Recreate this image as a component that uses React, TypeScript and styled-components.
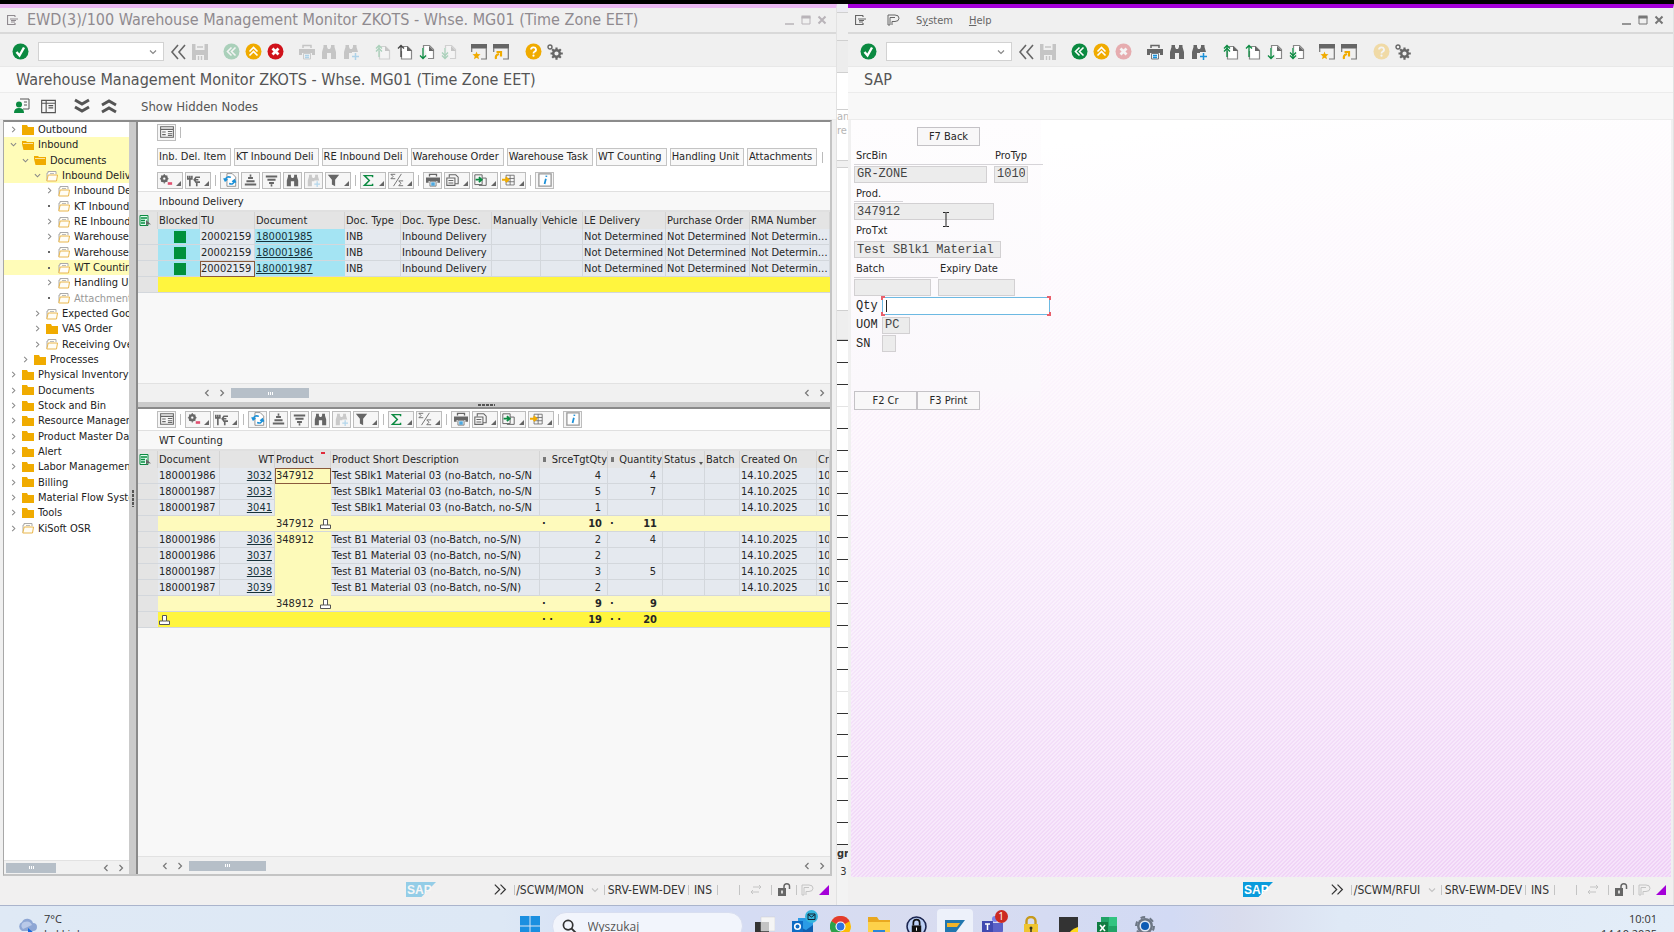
import React from "react";
import styled, { createGlobalStyle, css } from "styled-components";

const ui = `"DejaVu Sans Condensed", "DejaVu Sans", sans-serif`;
const mono = `"Liberation Mono", monospace`;

const Global = createGlobalStyle`
  * { box-sizing: border-box; }
  body { margin: 0; overflow: hidden; background: #000; font-family: ${ui}; font-size: 11px; color: #262626; }
  button, input { font: inherit; color: inherit; margin: 0; }
  button { padding: 0; border: 0; background: none; }
  svg { display: block; flex: none; }
`;

const Screen = styled.div`
  display: grid;
  grid-template-rows: minmax(0, 1fr) 27px;
  height: 100vh;
  padding-top: 4px;
`;
const Desktop = styled.main`
  display: grid;
  grid-template-columns: minmax(0, 837fr) 11px minmax(0, 826fr);
  min-height: 0;
  background: #fff;
`;

/* ---------- window frame ---------- */
const Frame = styled.section<{ $active?: boolean }>`
  display: flex;
  flex-direction: column;
  min-width: 0;
  min-height: 0;
  border-top: 4px solid ${(p) => (p.$active ? "#a400d8" : "#ebb8f3")};
  background: #f0f0f0;
  border-right: 1px solid #e2e2e2;
`;
const TitleBar = styled.header<{ $active?: boolean }>`
  display: flex;
  align-items: center;
  gap: 8px;
  flex: none;
  height: 26px;
  padding: 0 9px 0 7px;
  border-bottom: 2px solid #d9d9d9;
  color: ${(p) => (p.$active ? "#666" : "#8f8a8f")};
`;
const TitleText = styled.h1`
  margin: 0;
  flex: 1;
  font-size: 16px;
  font-weight: 400;
  line-height: 20px;
  white-space: nowrap;
  overflow: hidden;
`;
const Menu = styled.nav`
  display: flex;
  flex: 1;
  align-items: center;
  gap: 16px;
  padding-left: 12px;
  font-size: 11px;
`;
const WinButtons = styled.div<{ $active?: boolean }>`
  display: flex;
  gap: 6px;
  color: ${(p) => (p.$active ? "#777" : "#b9b4b9")};
`;
const Toolbar = styled.div`
  display: flex;
  align-items: center;
  flex: none;
  height: 33px;
  padding: 3px 0 0 9px;
  border-bottom: 1px solid #e8e8e8;
`;
const ToolGroup = styled.div<{ $gap: number }>`
  display: flex;
  margin-left: ${(p) => p.$gap}px;
`;
const ToolButton = styled.button<{ $dim?: boolean }>`
  display: flex;
  align-items: center;
  justify-content: center;
  width: 22px;
  height: 22px;
  color: #666;
  opacity: ${(p) => (p.$dim ? 0.3 : 1)};
`;
const Command = styled.div`
  display: flex;
  align-items: center;
  width: 126px;
  height: 19px;
  margin: 0 3px 0 7px;
  border: 1px solid #d2d2d2;
  background: #fff;
  color: #888;
`;
const CommandInput = styled.input`
  flex: 1;
  min-width: 0;
  height: 17px;
  border: 0;
  outline: 0;
  background: transparent;
`;
const CommandDrop = styled.button`
  width: 14px;
`;
const Heading = styled.div`
  flex: none;
  height: 26px;
  padding-left: 16px;
  border-bottom: 1px solid #ececec;
  background: #fafafa;
  color: #555;
  font-size: 16px;
  line-height: 26px;
  white-space: nowrap;
`;
const AppBar = styled.div`
  display: flex;
  align-items: center;
  flex: none;
  height: 27px;
  padding-left: 11px;
  background: #f8f8f8;
  border-bottom: 1px solid #ececec;
  color: #555;
  font-size: 13px;
`;
const AppBarButton = styled.button<{ $w: number }>`
  display: flex;
  align-items: center;
  justify-content: center;
  width: ${(p) => p.$w}px;
`;
const TextTool = styled.button`
  margin-left: 24px;
`;
const Status = styled.footer`
  display: flex;
  align-items: center;
  justify-content: flex-end;
  flex: none;
  height: 28px;
  padding: 0 5px 3px 0;
  background: #f1f0f0;
  font-size: 12px;
  white-space: nowrap;
`;
const StatusItem = styled.span<{ $w: number; $faint?: boolean }>`
  display: flex;
  align-items: center;
  justify-content: center;
  width: ${(p) => p.$w}px;
  height: 14px;
  color: ${(p) => (p.$faint ? "#c4c4c4" : "#333")};
`;
const StatusBreak = styled.i`
  width: 1px;
  height: 10px;
  background: #c4c4c4;
`;
const LogoSlot = styled.div<{ $dim?: boolean }>`
  width: 87px;
  opacity: ${(p) => (p.$dim ? 0.4 : 1)};
`;

/* ---------- monitor body ---------- */
const MonitorBody = styled.div`
  display: flex;
  flex: 1;
  min-height: 0;
  margin: 0 4px 1px 3px;
  border: 1px solid #a8a8a8;
  border-top: 2px solid #8c8c8c;
  border-right: 2px solid #c4c4c4;
  border-bottom: 2px solid #c4c4c4;
`;
const Tree = styled.aside`
  display: flex;
  flex-direction: column;
  justify-content: space-between;
  flex: none;
  width: 125px;
  overflow: hidden;
  background: #fff;
`;
const TreeList = styled.ul`
  display: grid;
  grid-auto-rows: 1fr;
  height: 414px;
  margin: 0;
  padding: 0;
  list-style: none;
`;
const TreeRow = styled.li<{ $level: number; $hot?: boolean; $dim?: boolean }>`
  display: flex;
  align-items: center;
  min-height: 0;
  padding-left: ${(p) => 3 + p.$level * 12}px;
  background: ${(p) => (p.$hot ? "#fffcb8" : "transparent")};
  color: ${(p) => (p.$dim ? "#999" : "#222")};
  white-space: nowrap;
`;
const TreeMark = styled.span`
  display: flex;
  justify-content: center;
  flex: none;
  width: 12px;
  margin-right: 3px;
  color: #888;
`;
const TreeDot = styled.i`
  width: 2px;
  height: 2px;
  background: #666;
`;
const TreeLabel = styled.span`
  margin-left: 4px;
`;
const VSplit = styled.div`
  display: flex;
  align-items: center;
  justify-content: center;
  flex: none;
  width: 9px;
  border-right: 2px solid #8a8a8a;
  background: #cbcbcb;
`;
const Grids = styled.div`
  display: flex;
  flex-direction: column;
  flex: 1;
  min-width: 0;
  background: #f8f8f8;
`;
const HSplit = styled.div`
  display: flex;
  align-items: center;
  justify-content: center;
  flex: none;
  height: 7px;
  padding-left: 4px;
  border-bottom: 2px solid #8a8a8a;
  background: #cbcbcb;
`;
const Grip = styled.i<{ $vertical?: boolean }>`
  width: ${(p) => (p.$vertical ? 2 : 17)}px;
  height: ${(p) => (p.$vertical ? 17 : 2)}px;
  background: repeating-linear-gradient(
    ${(p) => (p.$vertical ? "180deg" : "90deg")},
    #555 0 3px,
    transparent 3px 4px
  );
`;
const GridPane = styled.section<{ $h?: number }>`
  display: flex;
  flex-direction: column;
  flex: ${(p) => (p.$h ? `0 0 ${p.$h}px` : "1")};
  min-height: 0;
  overflow: hidden;
`;
const BarArea = styled.div`
  flex: none;
  padding: 1px 0 2px 19px;
  border-bottom: 1px solid #e0e0e0;
  background: #fff;
`;
const BarRow = styled.div<{ $mb?: number }>`
  display: flex;
  align-items: center;
  gap: 2px;
  height: 18px;
  margin-bottom: ${(p) => p.$mb ?? 0}px;
`;
const IconButton = styled.button<{ $split?: boolean }>`
  display: flex;
  align-items: center;
  justify-content: ${(p) => (p.$split ? "space-between" : "center")};
  width: ${(p) => (p.$split ? 26 : 19)}px;
  height: 17px;
  padding: 0 1px 0 1px;
  border: 1px solid #bdbdbd;
  background: #f6f6f6;
  color: #666;
`;
const Corner = styled.i`
  align-self: flex-end;
  width: 0;
  height: 0;
  margin-bottom: 2px;
  border-left: 5px solid transparent;
  border-bottom: 5px solid #666;
`;
const Faded = styled.span`
  opacity: 0.3;
`;
const Sep = styled.i`
  width: 1px;
  height: 11px;
  margin: 0 2px;
  background: #bbb;
`;
const TextButton = styled.button`
  flex: none;
  height: 18px;
  margin-right: 1px;
  padding: 0 4px 0 1px;
  border: 1px solid #c4c4c4;
  background: #f8f8f8;
  line-height: 14px;
  white-space: nowrap;
`;
const GridTitle = styled.h2`
  flex: none;
  height: 20px;
  margin: 0;
  padding-left: 21px;
  border-bottom: 2px solid #e0e0e0;
  background: #f8f8f8;
  font-size: 11px;
  font-weight: 400;
  line-height: 19px;
`;
const Table = styled.table`
  flex: none;
  width: 100%;
  table-layout: fixed;
  border-collapse: separate;
  border-spacing: 0;
`;
const Th = styled.th<{ $right?: boolean }>`
  position: relative;
  height: 17px;
  padding: 0 0 0 1px;
  overflow: hidden;
  border-right: 1px solid #d4d4d4;
  background: #e4e4e4;
  font-weight: 400;
  line-height: 16px;
  text-align: ${(p) => (p.$right ? "right" : "left")};
  white-space: nowrap;
`;
type Tone = "cell" | "cyan" | "key" | "sub" | "total" | "rowhead";
const tones: Record<Tone, string> = {
  cell: "#e5e9ef",
  cyan: "#a4e4f3",
  key: "#fdfab9",
  sub: "#fefabc",
  total: "#fff53e",
  rowhead: "#e4e4e4",
};
const Td = styled.td<{ $tone?: Tone; $right?: boolean; $link?: boolean; $focus?: boolean }>`
  height: 16px;
  padding: 0 ${(p) => (p.$link ? 2 : p.$right ? 6 : 0)}px 0 1px;
  overflow: hidden;
  border-bottom: 1px solid ${(p) => (p.$tone === "key" ? "#fdfab9" : "#d3d7dc")};
  ${(p) =>
    (!p.$tone || p.$tone === "cell") &&
    css`
      border-right: 1px solid #d3d7dc;
    `}
  background: ${(p) => tones[p.$tone ?? "cell"]};
  line-height: 15px;
  text-align: ${(p) => (p.$right ? "right" : "left")};
  white-space: nowrap;
  ${(p) =>
    p.$focus &&
    css`
      outline: 1px solid #8a5a3c;
      outline-offset: -1px;
    `}
`;
const DocLink = styled.a`
  color: #17323a;
  text-decoration: underline;
`;
const Flag = styled.i`
  display: block;
  width: 12px;
  height: 12px;
  margin: 0 auto;
  background: #00903c;
`;
const SumCell = styled.span`
  display: flex;
  justify-content: space-between;
  padding-left: 1px;
  font-weight: 700;
`;
const SubKey = styled.span`
  display: flex;
  align-items: center;
  gap: 6px;
`;
const SortMark = styled.i`
  position: absolute;
  top: 1px;
  right: 5px;
  width: 4px;
  height: 2px;
  background: #e02b3c;
`;
const FilterMark = styled.i`
  position: absolute;
  right: 1px;
  bottom: 3px;
  border: 2px solid transparent;
  border-top: 3px solid #555;
  border-bottom: 0;
`;
const SumHead = styled.span`
  display: flex;
  align-items: center;
  justify-content: space-between;
  padding-left: 2px;
  &::before { content: ""; width: 3px; height: 5px; background: #777; }
`;
const Spacer = styled.div`
  flex: 1;
`;
const HScroll = styled.div<{ $inset: number; $h: number }>`
  display: flex;
  align-items: center;
  flex: none;
  height: ${(p) => p.$h}px;
  padding: 0 1px 0 ${(p) => p.$inset}px;
  border-top: 1px solid #e2e2e2;
  background: #f1f1f1;
  color: #777;
`;
const ScrollArrow = styled.button`
  display: flex;
  align-items: center;
  justify-content: center;
  width: 15px;
`;
const Thumb = styled.div<{ $w: number }>`
  display: flex;
  align-items: center;
  justify-content: center;
  width: ${(p) => p.$w}px;
  height: 10px;
  margin: 0 auto 0 2px;
  background: #b6bfc8;
  &::after { content: ""; width: 5px; height: 3px; background: repeating-linear-gradient(90deg, #fff 0 1px, transparent 1px 2px); }
`;

/* ---------- spreadsheet visible between the windows ---------- */
const Behind = styled.div`
  display: flex;
  flex-direction: column;
  overflow: hidden;
  background: #fff;
  color: #b5b5b5;
`;
const Band = styled.div<{ $h: number; $bg?: string }>`
  flex: none;
  height: ${(p) => p.$h}px;
  border-bottom: 1px solid #d0d0d0;
  background: ${(p) => p.$bg ?? "#fff"};
  line-height: 14px;
`;
const SheetRows = styled.div`
  display: grid;
  grid-auto-rows: 1fr;
  flex: none;
  height: 504px;
`;
const SheetRow = styled.i<{ $faint?: boolean }>`
  border-top: 1px solid ${(p) => (p.$faint ? "#e4e4e4" : "#333")};
`;
const SheetFoot = styled.div`
  flex: 1;
  border-top: 1px solid #333;
  background: #f3f3f3;
  color: #333;
  line-height: 18px;
`;

/* ---------- RF screen ---------- */
const RfBody = styled.div`
  flex: 1;
  min-height: 0;
  margin: 0 2px 0 3px;
  background:
    linear-gradient(135deg, rgba(255, 255, 255, 0.4) 25%, transparent 25% 50%, rgba(255, 255, 255, 0.4) 50% 75%, transparent 75%) 0 0 / 4px 4px,
    linear-gradient(172deg, #ffffff 6%, #fbf3fc 36%, #f5e5fa 62%, #efd0f6 100%);
`;
const RfForm = styled.form`
  display: grid;
  grid-auto-rows: 1fr;
  width: 190px;
  height: 290px;
  padding: 7px 0 0 3px;
  background: linear-gradient(#fefdfe, #fbf8fc 92%, transparent);
`;
const RfRow = styled.div<{ $gap?: number; $rule?: number }>`
  display: flex;
  align-items: center;
  gap: ${(p) => p.$gap ?? 0}px;
  min-height: 0;
  background: ${(p) => (p.$rule ? `linear-gradient(#d6d4d8, #d6d4d8) 0 100% / ${p.$rule}px 1px no-repeat` : "none")};
`;
const RfLabel = styled.label<{ $w: number; $mono?: boolean }>`
  flex: none;
  width: ${(p) => p.$w}px;
  padding-left: 2px;
  font-family: ${(p) => (p.$mono ? mono : ui)};
  font-size: ${(p) => (p.$mono ? 12 : 11)}px;
`;
const RfField = styled.input<{ $w: number }>`
  flex: none;
  width: ${(p) => p.$w}px;
  height: 17px;
  padding: 0 2px;
  border: 1px solid #d2d0d2;
  background: #ececec;
  color: #444;
  font-family: ${mono};
  font-size: 12px;
`;
const FocusBox = styled.span`
  position: relative;
  flex: none;
  width: 168px;
  height: 18px;
  border: 1px solid #6db9e2;
  background: #fff;
  &::before, &::after { content: ""; position: absolute; top: -2px; bottom: -2px; width: 4px; }
  &::before { left: -2px; background: linear-gradient(#e8606c 0 4px, transparent 4px 16px, #e8606c 16px); }
  &::after { right: -2px; background: linear-gradient(#e8606c 0 4px, transparent 4px 16px, #e8606c 16px); }
`;
const QtyInput = styled.input`
  position: relative;
  z-index: 1;
  display: block;
  width: 100%;
  height: 16px;
  padding: 0 2px;
  border: 0;
  outline: 0;
  background: linear-gradient(#222, #222) 3px 50% / 1px 12px no-repeat #fff;
  font-family: ${mono};
`;
const RfButton = styled.button`
  width: 63px;
  height: 19px;
  border: 1px solid #c4c2c6;
  background: #f8f7f8;
`;
const Indent = styled.span`
  width: 63px;
`;
const Pointer = styled.svg`
  position: fixed;
  left: 941px;
  top: 212px;
`;

/* ---------- taskbar ---------- */
const Taskbar = styled.footer`
  overflow: hidden;
  border-top: 1px solid #aab4cc;
  background: linear-gradient(90deg, #dfe9f5 0, #dde8f5 30%, #d3dcf5 38%, #d8dcf0 55%, #d2daf4 70%, #d9dced 74%, #dfe9f6 80%, #e3edf8 100%);
  color: #333;
  font-family: "Open Sans", sans-serif;
  font-size: 11px;
`;
const TaskRow = styled.div`
  display: grid;
  grid-template-columns: 1fr auto 1fr;
  align-items: center;
  height: 40px;
`;
const Weather = styled.div`
  display: flex;
  align-items: center;
  gap: 7px;
  padding-left: 17px;
  line-height: 15px;
`;
const Apps = styled.div`
  display: flex;
  align-items: center;
  gap: 2px;
  padding-left: 8px;
`;
const TaskApp = styled.button<{ $active?: boolean }>`
  position: relative;
  display: flex;
  align-items: center;
  justify-content: center;
  width: 36px;
  height: 34px;
  border-radius: 4px;
  background: ${(p) => (p.$active ? "#edf1fa" : "transparent")};
`;
const Search = styled.label`
  display: flex;
  align-items: center;
  gap: 9px;
  width: 191px;
  height: 28px;
  margin: 0 2px 0 10px;
  padding-left: 9px;
  border: 1px solid #d8def0;
  border-radius: 14px;
  background: #f2f5fc;
`;
const SearchInput = styled.input`
  width: 120px;
  border: 0;
  outline: 0;
  background: transparent;
  font-size: 12px;
  &::placeholder { color: #555; opacity: 1; }
`;
const Badge = styled.span<{ $bg: string }>`
  position: absolute;
  top: 1px;
  right: 3px;
  width: 13px;
  height: 13px;
  border-radius: 50%;
  background: ${(p) => p.$bg};
  color: #fff;
  font-size: 10px;
  line-height: 13px;
  text-align: center;
`;
const Clock = styled.div`
  padding-right: 17px;
  line-height: 15px;
  text-align: right;
`;

/* ---------- icons ---------- */
const Ic = ({ s = 16, vb = 16, children }: { s?: number; vb?: number; children: React.ReactNode }) => (
  <svg width={s} height={s} viewBox={`0 0 ${vb} ${vb}`} fill="none" stroke="currentColor" strokeWidth="1.5">
    {children}
  </svg>
);
const Disc = ({ fill, d, w = 2 }: { fill: string; d: string; w?: number }) => (
  <Ic s={17} vb={17}>
    <circle cx="8.5" cy="8.5" r="8" fill={fill} stroke="none" />
    <path d={d} stroke="#fff" strokeWidth={w} />
  </Ic>
);
const OkIcon = () => <Disc fill="#0b8a41" d="M4.5 9l3 3.5L12 4.5" w={2.4} />;
const BackIcon = () => <Disc fill="#0b8a41" d="M8.5 4.5l-4 4 4 4M12.5 4.5l-4 4 4 4" w={1.6} />;
const ExitIcon = () => <Disc fill="#f0ab00" d="M4.5 8.5l4-4 4 4M4.5 12.5l4-4 4 4" w={1.6} />;
const CancelIcon = () => <Disc fill="#d0121b" d="M5.5 5.5l6 6M11.5 5.5l-6 6" w={2.8} />;
const HelpIcon = () => (
  <Ic s={17} vb={17}>
    <circle cx="8.5" cy="8.5" r="8" fill="#f0ab00" stroke="none" />
    <path d="M6 6.5a2.5 2.3 0 1 1 3.5 2.2q-1 .5-1 1.8" stroke="#fff" strokeWidth="1.8" />
    <circle cx="8.5" cy="12.7" r="1.1" fill="#fff" stroke="none" />
  </Ic>
);
const DblLeft = () => <Ic><path d="M8 1L2 8l6 7M15 1L9 8l6 7" strokeWidth="1.6" /></Ic>;
const SaveIcon = () => (
  <Ic>
    <path d="M0 0h16v16H0z" fill="currentColor" stroke="none" />
    <path d="M3.500 0h9v6h-9zM4 11h8v5H4z" fill="#f1f1f1" stroke="none" />
    <path d="M5 3h6M6.500 12v4M9.500 12v4" strokeWidth="1.400" />
  </Ic>
);
const PrintIcon = ({ s = 16 }: { s?: number }) => (
  <Ic s={s}>
    <path d="M4 4V1.5h8V4" /><path d="M0 5h16v6h-3V9H3v2H0z" fill="currentColor" stroke="none" />
    <path d="M4.500 9.500h7v5.500h-7z" stroke="#777" strokeWidth="1" fill="#e8f4fb" /><path d="M6 11.500h4M6 13.500h4" stroke="#1a90d8" />
  </Ic>
);
const Bino = ({ s = 16, plus }: { s?: number; plus?: boolean }) => (
  <Ic s={s}>
    <path d="M2.500 1h3.500v2l1 2h2l1-2V1h3.500v2L15 8v7h-5V9H6v6H1V8l1.500-5z" fill="currentColor" stroke="none" />
    {plus && <><path d="M9 8h7v8H9z" fill="#f1f1f1" stroke="none" /><path d="M12.500 9v7M9 12.500h7" stroke="#1a90d8" /></>}
  </Ic>
);
const PageIcon = ({ up, twice, dark }: { up?: boolean; twice?: boolean; dark?: boolean }) => (
  <Ic>
    <path d={up ? "M6 2.500h4.500l4 4V15H4.500V7" : "M5 1.500h5.500l4 4V14.500H9M4.500 1v3"} stroke="#888" strokeWidth="1.200" fill="#fff" />
    <path d="M10 2v5h5z" fill="#666" stroke="none" />
    <g stroke={dark ? "#444" : "#0b8a41"} strokeWidth="1.300">
      {up ? <path d="M4 13V1.500M1 4.500l3-3 3 3" /> : <path d="M4 4v11M1 11.500l3 3 3-3" />}
      {twice && <path d={up ? "M1 7.500l3-3 3 3" : "M1 8.500l3 3 3-3"} />}
    </g>
  </Ic>
);
const WinIcon = ({ star }: { star?: boolean }) => (
  <Ic>
    <path d="M0 0h16v4.500H0z" fill="#666" stroke="none" /><path d="M15.300 4v11H10M.7 4v4" stroke="#777" strokeWidth="1.200" />
    {star ? (
      <path d="M5.500 7.500l1 2.500 3 .300-2.200 2 .700 3L5.500 13.700 3 15.300l.700-3-2.200-2 3-.300z" fill="#f0ab00" stroke="none" />
    ) : (
      <path d="M3 15q-1-4 3-5M3.500 8h4.500v4.500" stroke="#f0ab00" strokeWidth="2.200" />
    )}
  </Ic>
);
const GearIcon = ({ s = 16 }: { s?: number }) => (
  <Ic s={s}>
    <circle cx="9.500" cy="9.500" r="3.300" strokeWidth="2.400" />
    <path d="M9.500 3.500v2.500M9.500 13v2.800M3.500 9.500H6M13 9.500h2.800M5.200 5.200l1.800 1.800M12 12l1.800 1.800M13.800 5.200L12 7M5.200 13.800L7 12" strokeWidth="2.200" />
    <circle cx="3" cy="3" r="2" strokeWidth="1.400" />
  </Ic>
);
const Chev = ({ dir, s = 8 }: { dir: "l" | "r" | "d"; s?: number }) => (
  <Ic s={s} vb={8}><path d={{ l: "M5.500 1L2.500 4l3 3", r: "M2.500 1l3 3-3 3", d: "M1 2.500l3 3 3-3" }[dir]} strokeWidth="1.200" /></Ic>
);
const Folder = ({ open, light }: { open?: boolean; light?: boolean }) =>
  light ? (
    <svg width="12" height="12" viewBox="0 0 12 12" fill="#fffdf5" stroke="#e9b64c"><path d="M1 10.500V3h1V1.500h8V4" stroke="#aaa" /><path d="M.8 11l1.400-6h9.300l-1 6z" /><path d="M4 3.500h4" stroke="#bbb" /></svg>
  ) : (
    <svg width="12" height="12" viewBox="0 0 12 12" fill="#f0ab00"><path d={open ? "M0 2h4l1 1h7v8H1.500L0 5z" : "M0 1h5l1 2h6v8H0z"} />{open && <path d="M1 4.500h10" stroke="#fbe3a0" />}</svg>
  );
const MenuIcon = () => (
  <svg width="12" height="10" viewBox="0 0 12 10" fill="none" stroke="currentColor"><path d="M8 .5H.5v9H8V8M8 .5V2M3 4h8M4 5.500h5M4 7h4" strokeWidth="1.200" /></svg>
);
const PIcon = () => (
  <svg width="13" height="12" viewBox="0 0 13 12" fill="none" stroke="currentColor"><path d="M1 6V1h7q4 0 4 3.200T8 7.500H5V11M3 3.500h5M1 6v5h2V3.500" /></svg>
);
const Sort = ({ down }: { down?: boolean }) => (
  <Ic s={13}><path d={down ? "M1 3h14M3 7h10M5 11h6M7 14h2" : "M1 13h14M3 9h10M5 5h6M7 2h2"} strokeWidth="2.600" /></Ic>
);
const Refresh = () => (
  <Ic s={14}><path d="M4.500.700h6l4 4v10.500h-10z" fill="#fff" stroke="#888" strokeWidth="1" /><path d="M9 5Q4 3 2.500 8M1 6l1.500 3L5 7M7 12q5 2 6-3M14.500 11L13 8l-2.500 2" stroke="#1a90d8" strokeWidth="1.800" /></Ic>
);
const Filter = () => <Ic s={13}><path d="M1 1h14L10 7v8l-4-2V7z" fill="currentColor" stroke="none" /></Ic>;
const Detail = () => (
  <Ic s={14}><path d="M.700 2h14.600v12H.700zM.700 5h14.600M2.500 8h4M2.500 11h4M9 7.500h5M9 10h5M9 12h5" strokeWidth="1.200" /></Ic>
);
const Tools = () => <Ic s={13}><path d="M1 2v4h5V2M3.500 2v13M16 4h-5l-2 3 2 3h5M8 7h6M12 10v5" strokeWidth="2" /></Ic>;
const GearRed = () => (
  <Ic s={14}><circle cx="6" cy="6.500" r="3" strokeWidth="2.400" /><path d="M6 1v11M1 6.500h10M2.500 3l7 7M9.500 3l-7 7" strokeWidth="1.200" /><circle cx="6" cy="6.500" r="1.300" fill="#fff" stroke="none" /><path d="M10 12h5" stroke="#e05070" strokeWidth="3" /></Ic>
);
const Sigma = () => <Ic s={13}><path d="M13 4V2H3l6 6-6 6h10v-2" stroke="#0b8a41" strokeWidth="1.800" /></Ic>;
const SubSum = () => <Ic s={14}><path d="M6 1.500H1L3.500 4 1 6.500h5M13 1L4 15M15 9h-5l2.500 2.700L10 14.500h5" strokeWidth="1" /></Ic>;
const Views = () => <Ic s={13}><path d="M4 4V1h8l3 3v8h-4M1 5h10v9H1zM3 8h6M3 11h6" strokeWidth="1.300" /></Ic>;
const Export = () => <Ic s={13}><path d="M1 1h9v12H1zM10 5h5v9H6" strokeWidth="1.200" /><path d="M2 7h6M6 4l3.500 3L6 10" stroke="#0b8a41" strokeWidth="2.200" /></Ic>;
const Layout = () => <Ic s={13}><path d="M5 1.500h10v12H5zM5 5.500h10M5 9.500h10M10 1.500v12" strokeWidth="1" /><path d="M0 7h6M4.500 4l3.500 3-3.500 3" stroke="#f0ab00" strokeWidth="2.400" /></Ic>;
const Info = () => (
  <Ic s={14}><path d="M1 1h14v14H1z" fill="#fff" stroke="#999" /><path d="M9 6.500l-1.500 6M9.700 3l-.300 1.500" stroke="#1a90d8" strokeWidth="2" /></Ic>
);
const Subtotal = () => <svg width="11" height="10" viewBox="0 0 11 10" fill="#fff" stroke="#555"><path d="M3.500.500h4v5.500h3v3.500H.500V6h3z" /><path d="M3.500 6h4" /></svg>;
const SelectAll = () => (
  <svg width="12" height="12" viewBox="0 0 12 12" fill="none"><path d="M1 .5h8v10H1z" fill="#dfe" stroke="#0b8a41" /><path d="M2 3h6M2 5.500h4M2 8h4" stroke="#0b8a41" strokeWidth="1.500" /><path d="M7 5v6l2-2 3 .500z" fill="#666" /></svg>
);
const SapLogo = () => (
  <svg width="30" height="15" viewBox="0 0 30 15"><path d="M0 0h30L15.500 15H0z" fill="#0a9bdc" /><text x="1" y="12" fill="#fff" fontFamily="Liberation Sans" fontWeight="700" fontSize="12">SAP</text></svg>
);
const Lock = () => (
  <svg width="13" height="13" viewBox="0 0 13 13"><path d="M0 5h8v8H0z" fill="#666" /><path d="M6 5V3.500q0-2.700 2.800-2.700T11.500 3.500V6" fill="none" stroke="#666" strokeWidth="1.500" /><path d="M4 7.500v3" stroke="#fff" strokeWidth="1.500" /></svg>
);

/* ---------- shared parts ---------- */
const WindowControls = ({ active }: { active?: boolean }) => (
  <WinButtons $active={active}>
    <button aria-label="Minimize"><Ic s={10} vb={10}><path d="M0 9h9" /></Ic></button>
    <button aria-label="Maximize"><Ic s={10} vb={10}><path d="M1 1.500h8v7.500H1z" strokeWidth="1" /><path d="M.500 2h9" strokeWidth="3" /></Ic></button>
    <button aria-label="Close"><Ic s={10} vb={10}><path d="M1.500 1.500l7 7M8.500 1.500l-7 7" strokeWidth="2" /></Ic></button>
  </WinButtons>
);

type Tool = [string, React.ReactNode];
const StandardToolbar = ({ dim }: { dim: string[] }) => {
  const groups: { gap: number; tools: Tool[] }[] = [
    { gap: 0, tools: [["Collapse", <DblLeft />], ["Save", <SaveIcon />]] },
    { gap: 9, tools: [["Back", <BackIcon />], ["Exit", <ExitIcon />], ["Cancel", <CancelIcon />]] },
    { gap: 10, tools: [["Print", <PrintIcon />], ["Find", <Bino />], ["Find next", <Bino plus />]] },
    {
      gap: 10,
      tools: [
        ["First page", <PageIcon up twice />],
        ["Previous page", <PageIcon up dark={dim.includes("First page")} />],
        ["Next page", <PageIcon />],
        ["Last page", <PageIcon twice />],
      ],
    },
    { gap: 8, tools: [["New session", <WinIcon star />], ["Shortcut", <WinIcon />]] },
    { gap: 10, tools: [["Help", <HelpIcon />], ["Options", <GearIcon />]] },
  ];
  return (
    <Toolbar>
      <ToolButton aria-label="Enter"><OkIcon /></ToolButton>
      <Command>
        <CommandInput aria-label="Command" />
        <CommandDrop aria-label="Command history"><Chev dir="d" /></CommandDrop>
      </Command>
      {groups.map((g, i) => (
        <ToolGroup key={i} $gap={g.gap}>
          {g.tools.map(([name, icon]) => (
            <ToolButton key={name} aria-label={name} $dim={dim.includes(name)}>{icon}</ToolButton>
          ))}
        </ToolGroup>
      ))}
    </Toolbar>
  );
};

const StatusBar = ({ tcode, active }: { tcode: string; active?: boolean }) => (
  <Status>
    <LogoSlot $dim={!active}><SapLogo /></LogoSlot>
    <StatusItem $w={14}><Ic s={13}><path d="M1 2l6 6-6 6M8 2l6 6-6 6" /></Ic></StatusItem>
    <StatusItem $w={7} />
    <StatusBreak />
    <StatusItem $w={70}>{tcode}</StatusItem>
    <StatusItem $w={19} $faint><Chev dir="d" /></StatusItem>
    <StatusBreak />
    <StatusItem $w={83}>SRV-EWM-DEV</StatusItem>
    <StatusBreak />
    <StatusItem $w={28}>INS</StatusItem>
    <StatusBreak />
    <StatusItem $w={21} />
    <StatusBreak />
    <StatusItem $w={31} $faint>
      <svg width="12" height="10" viewBox="0 0 12 10" fill="none" stroke="currentColor"><path d="M3 2h8M9 0l2 2-2 2M9 7H1M3 5L1 7l2 2" /></svg>
    </StatusItem>
    <StatusBreak />
    <StatusItem $w={24}><Lock /></StatusItem>
    <StatusBreak />
    <StatusItem $w={20} $faint><PIcon /></StatusItem>
    <StatusItem $w={14}><svg width="10" height="10" viewBox="0 0 10 10"><path d="M10 0v10H0z" fill="#a400d8" /></svg></StatusItem>
  </Status>
);

const Scrollbar = ({ inset, thumb, h }: { inset: number; thumb: number; h: number }) => (
  <HScroll $inset={inset} $h={h}>
    <ScrollArrow aria-label="Scroll left"><Chev dir="l" /></ScrollArrow>
    <ScrollArrow aria-label="Scroll right"><Chev dir="r" /></ScrollArrow>
    <Thumb $w={thumb} />
    <ScrollArrow aria-label="Scroll left"><Chev dir="l" /></ScrollArrow>
    <ScrollArrow aria-label="Scroll right"><Chev dir="r" /></ScrollArrow>
  </HScroll>
);

const Split = ({ name, children }: { name: string; children: React.ReactNode }) => (
  <IconButton $split aria-label={name}>{children}<Corner /></IconButton>
);
const GridTools = () => (
  <>
    <Split name="Methods"><GearRed /></Split>
    <Split name="More methods"><Tools /></Split>
    <Sep />
    <IconButton aria-label="Refresh"><Refresh /></IconButton>
    <IconButton aria-label="Sort ascending"><Sort /></IconButton>
    <IconButton aria-label="Sort descending"><Sort down /></IconButton>
    <IconButton aria-label="Find"><Bino s={13} /></IconButton>
    <IconButton aria-label="Find next"><Faded><Bino s={13} plus /></Faded></IconButton>
    <Split name="Filter"><Filter /></Split>
    <Sep />
    <Split name="Total"><Sigma /></Split>
    <Split name="Subtotal"><SubSum /></Split>
    <Sep />
    <IconButton aria-label="Print"><PrintIcon s={14} /></IconButton>
    <Split name="Views"><Views /></Split>
    <Split name="Export"><Export /></Split>
    <Split name="Layout"><Layout /></Split>
    <Sep />
    <IconButton aria-label="Information"><Info /></IconButton>
  </>
);

/* ---------- data ---------- */
type Node = { t: string; l: number; m: "r" | "d" | "."; f?: "light" | "open"; hot?: boolean; dim?: boolean };
const nodes: Node[] = [
  { t: "Outbound", l: 0, m: "r" },
  { t: "Inbound", l: 0, m: "d", f: "open", hot: true },
  { t: "Documents", l: 1, m: "d", f: "open", hot: true },
  { t: "Inbound Delivery", l: 2, m: "d", f: "light", hot: true },
  { t: "Inbound Delivery Item", l: 3, m: "r", f: "light" },
  { t: "KT Inbound Delivery", l: 3, m: ".", f: "light" },
  { t: "RE Inbound Delivery", l: 3, m: "r", f: "light" },
  { t: "Warehouse Order", l: 3, m: "r", f: "light" },
  { t: "Warehouse Task", l: 3, m: ".", f: "light" },
  { t: "WT Counting", l: 3, m: ".", f: "light", hot: true },
  { t: "Handling Unit", l: 3, m: "r", f: "light" },
  { t: "Attachments", l: 3, m: ".", f: "light", dim: true },
  { t: "Expected Goods Receipt", l: 2, m: "r", f: "light" },
  { t: "VAS Order", l: 2, m: "r" },
  { t: "Receiving Overview", l: 2, m: "r", f: "light" },
  { t: "Processes", l: 1, m: "r" },
  { t: "Physical Inventory", l: 0, m: "r" },
  { t: "Documents", l: 0, m: "r" },
  { t: "Stock and Bin", l: 0, m: "r" },
  { t: "Resource Management", l: 0, m: "r" },
  { t: "Product Master Data", l: 0, m: "r" },
  { t: "Alert", l: 0, m: "r" },
  { t: "Labor Management", l: 0, m: "r" },
  { t: "Billing", l: 0, m: "r" },
  { t: "Material Flow System", l: 0, m: "r" },
  { t: "Tools", l: 0, m: "r" },
  { t: "KiSoft OSR", l: 0, m: "r", f: "light" },
];
const methods = ["Inb. Del. Item", "KT Inbound Deli", "RE Inbound Deli", "Warehouse Order", "Warehouse Task", "WT Counting", "Handling Unit", "Attachments"];
const deliveryCols: [string, number][] = [
  ["Blocked", 42], ["TU", 55], ["Document", 90], ["Doc. Type", 56], ["Doc. Type Desc.", 91], ["Manually", 49],
  ["Vehicle", 42], ["LE Delivery", 83], ["Purchase Order", 84], ["RMA Number", 0],
];
const b1 = "Test B1 Material 03 (no-Batch, no-S/N)";
const s1 = "Test SBlk1 Material 03 (no-Batch, no-S/N";
type CountRow =
  | { kind: "row"; doc: string; wt: string; prod?: string; text: string; src: number; qty?: number; focus?: boolean }
  | { kind: "sub" | "total"; prod?: string; src: number; qty: number };
const counting: CountRow[] = [
  { kind: "row", doc: "180001986", wt: "3032", prod: "347912", text: s1, src: 4, qty: 4, focus: true },
  { kind: "row", doc: "180001987", wt: "3033", text: s1, src: 5, qty: 7 },
  { kind: "row", doc: "180001987", wt: "3041", text: s1, src: 1 },
  { kind: "sub", prod: "347912", src: 10, qty: 11 },
  { kind: "row", doc: "180001986", wt: "3036", prod: "348912", text: b1, src: 2, qty: 4 },
  { kind: "row", doc: "180001986", wt: "3037", text: b1, src: 2 },
  { kind: "row", doc: "180001987", wt: "3038", text: b1, src: 3, qty: 5 },
  { kind: "row", doc: "180001987", wt: "3039", text: b1, src: 2 },
  { kind: "sub", prod: "348912", src: 9, qty: 9 },
  { kind: "total", src: 19, qty: 20 },
];
const countingWidths = [20, 62, 55, 56, 209, 68, 55, 42, 35, 77];

const DeliveryGrid = () => (
  <Table>
    <colgroup>
      <col width={20} />
      {deliveryCols.map(([n, w]) => <col key={n} width={w || undefined} />)}
    </colgroup>
    <thead>
      <tr>
        <Th aria-label="Select all"><SelectAll /></Th>
        {deliveryCols.map(([n]) => <Th key={n}>{n}</Th>)}
      </tr>
    </thead>
    <tbody>
      {["180001985", "180001986", "180001987"].map((doc, i) => (
        <tr key={doc}>
          <Td $tone="rowhead" />
          <Td $tone="cyan"><Flag /></Td>
          <Td $focus={i === 2}>20002159</Td>
          <Td $tone="cyan"><DocLink href="#">{doc}</DocLink></Td>
          <Td>INB</Td>
          <Td>Inbound Delivery</Td>
          <Td />
          <Td />
          <Td>Not Determined</Td>
          <Td>Not Determined</Td>
          <Td>Not Determin…</Td>
        </tr>
      ))}
      <tr>
        <Td $tone="rowhead" />
        <Td $tone="total" colSpan={10} />
      </tr>
    </tbody>
  </Table>
);

const CountingGrid = () => (
  <Table>
    <colgroup>
      {countingWidths.map((w, i) => <col key={i} width={w} />)}
      <col />
    </colgroup>
    <thead>
      <tr>
        <Th aria-label="Select all"><SelectAll /></Th>
        <Th>Document</Th>
        <Th $right>WT</Th>
        <Th>Product<SortMark /></Th>
        <Th>Product Short Description</Th>
        <Th><SumHead>SrceTgtQty</SumHead></Th>
        <Th><SumHead>Quantity</SumHead></Th>
        <Th>Status<FilterMark /></Th>
        <Th>Batch</Th>
        <Th>Created On</Th>
        <Th>Cr</Th>
      </tr>
    </thead>
    <tbody>
      {counting.map((r, i) =>
        r.kind === "row" ? (
          <tr key={i}>
            <Td $tone="rowhead" />
            <Td>{r.doc}</Td>
            <Td $right $link><DocLink href="#">{r.wt}</DocLink></Td>
            <Td $tone="key" $focus={r.focus}>{r.prod}</Td>
            <Td>{r.text}</Td>
            <Td $right>{r.src}</Td>
            <Td $right>{r.qty}</Td>
            <Td />
            <Td />
            <Td>14.10.2025</Td>
            <Td>10</Td>
          </tr>
        ) : (
          <tr key={i}>
            <Td $tone="rowhead" />
            <Td $tone={r.kind} colSpan={r.kind === "total" ? 4 : 2}>{r.kind === "total" && <Subtotal />}</Td>
            {r.kind === "sub" && <Td $tone="sub" colSpan={2}><SubKey>{r.prod}<Subtotal /></SubKey></Td>}
            <Td $tone={r.kind} $right><SumCell><span>{r.kind === "sub" ? "·" : "· ·"}</span>{r.src}</SumCell></Td>
            <Td $tone={r.kind} $right><SumCell><span>{r.kind === "sub" ? "·" : "· ·"}</span>{r.qty}</SumCell></Td>
            <Td $tone={r.kind} colSpan={4} />
          </tr>
        ),
      )}
    </tbody>
  </Table>
);

const Monitor = () => (
  <Frame>
    <TitleBar>
      <MenuIcon />
      <TitleText>EWD(3)/100 Warehouse Management Monitor ZKOTS - Whse. MG01 (Time Zone EET)</TitleText>
      <WindowControls />
    </TitleBar>
    <StandardToolbar dim={["Save", "Back", "Print", "Find", "Find next", "First page", "Last page"]} />
    <Heading>Warehouse Management Monitor ZKOTS - Whse. MG01 (Time Zone EET)</Heading>
    <AppBar>
      <AppBarButton $w={22} aria-label="User"><Ic><path d="M6 1h9v10H9M10 4h3M10 7h3" strokeWidth="1" /><circle cx="5" cy="6.500" r="3" fill="#0b8a41" stroke="none" /><path d="M0 15q0-5 5-5t5 5z" fill="#0b8a41" stroke="none" /></Ic></AppBarButton>
      <AppBarButton $w={30} aria-label="Layout"><Ic s={15}><path d="M.700 1.500h14.600v13H.700zM.700 4.500h14.600M5.500 1.500v13M8 7h5M8 9.500h5" strokeWidth="1.200" /></Ic></AppBarButton>
      <AppBarButton $w={38} aria-label="Expand"><Ic><path d="M1 2l7 4 7-4M1 9l7 4 7-4" strokeWidth="3" /></Ic></AppBarButton>
      <AppBarButton $w={16} aria-label="Collapse"><Ic><path d="M1 7l7-4 7 4M1 14l7-4 7 4" strokeWidth="3" /></Ic></AppBarButton>
      <TextTool>Show Hidden Nodes</TextTool>
    </AppBar>
    <MonitorBody>
      <Tree>
        <TreeList>
          {nodes.map((n, i) => (
            <TreeRow key={i} $level={n.l} $hot={n.hot} $dim={n.dim}>
              <TreeMark>{n.m === "." ? <TreeDot /> : <Chev dir={n.m} s={7} />}</TreeMark>
              <Folder open={n.f === "open"} light={n.f === "light"} />
              <TreeLabel>{n.t}</TreeLabel>
            </TreeRow>
          ))}
        </TreeList>
        <HScroll $inset={0} $h={14}>
          <Thumb $w={50} />
          <ScrollArrow aria-label="Scroll left"><Chev dir="l" /></ScrollArrow>
          <ScrollArrow aria-label="Scroll right"><Chev dir="r" /></ScrollArrow>
        </HScroll>
      </Tree>
      <VSplit><Grip $vertical /></VSplit>
      <Grids>
        <GridPane $h={280}>
          <BarArea>
            <BarRow $mb={7}><IconButton aria-label="Selection"><Detail /></IconButton><Sep /></BarRow>
            <BarRow $mb={5}>{methods.map((m) => <TextButton key={m}>{m}</TextButton>)}<Sep /></BarRow>
            <BarRow><GridTools /></BarRow>
          </BarArea>
          <GridTitle>Inbound Delivery</GridTitle>
          <DeliveryGrid />
          <Spacer />
          <Scrollbar inset={61} thumb={78} h={19} />
        </GridPane>
        <HSplit><Grip /></HSplit>
        <GridPane>
          <BarArea>
            <BarRow><IconButton aria-label="Selection"><Detail /></IconButton><Sep /><GridTools /></BarRow>
          </BarArea>
          <GridTitle>WT Counting</GridTitle>
          <CountingGrid />
          <Spacer />
          <Scrollbar inset={19} thumb={77} h={18} />
        </GridPane>
      </Grids>
    </MonitorBody>
    <StatusBar tcode="/SCWM/MON" />
  </Frame>
);

const RfScreen = () => (
  <Frame $active>
    <TitleBar $active>
      <MenuIcon />
      <Menu><PIcon /><span>S<u>y</u>stem</span><span><u>H</u>elp</span></Menu>
      <WindowControls active />
    </TitleBar>
    <StandardToolbar dim={["Save", "Cancel", "Help"]} />
    <Heading>SAP</Heading>
    <AppBar />
    <RfBody>
      <RfForm>
        <RfRow><Indent /><RfButton type="button">F7 Back</RfButton></RfRow>
        <RfRow $rule={189}><RfLabel htmlFor="bin" $w={139}>SrcBin</RfLabel><RfLabel htmlFor="typ" $w={48}>ProTyp</RfLabel></RfRow>
        <RfRow $gap={7}><RfField id="bin" $w={133} readOnly value="GR-ZONE" /><RfField id="typ" $w={34} readOnly value="1010" /></RfRow>
        <RfRow $rule={49}><RfLabel htmlFor="prod" $w={80}>Prod.</RfLabel></RfRow>
        <RfRow><RfField id="prod" $w={140} readOnly value="347912" /></RfRow>
        <RfRow><RfLabel htmlFor="txt" $w={80}>ProTxt</RfLabel></RfRow>
        <RfRow><RfField id="txt" $w={147} readOnly value="Test SBlk1 Material" /></RfRow>
        <RfRow $rule={84}><RfLabel htmlFor="batch" $w={84}>Batch</RfLabel><RfLabel htmlFor="exp" $w={80}>Expiry Date</RfLabel></RfRow>
        <RfRow $gap={7}><RfField id="batch" $w={77} readOnly /><RfField id="exp" $w={77} readOnly /></RfRow>
        <RfRow><RfLabel htmlFor="qty" $w={28} $mono>Qty</RfLabel><FocusBox><QtyInput id="qty" /></FocusBox></RfRow>
        <RfRow><RfLabel htmlFor="uom" $w={28} $mono>UOM</RfLabel><RfField id="uom" $w={28} readOnly value="PC" /></RfRow>
        <RfRow><RfLabel htmlFor="sn" $w={28} $mono>SN</RfLabel><RfField id="sn" $w={14} readOnly /></RfRow>
        <RfRow />
        <RfRow />
        <RfRow><RfButton type="button">F2 Cr</RfButton><RfButton type="button">F3 Print</RfButton></RfRow>
      </RfForm>
    </RfBody>
    <StatusBar tcode="/SCWM/RFUI" active />
    <Pointer width="10" height="15" viewBox="0 0 10 15" fill="none" stroke="#222"><path d="M2 .500h2.500L5 1l.500-.500H8M5 1v13M2 14.500h2.500L5 14l.500.500H8" /></Pointer>
  </Frame>
);

const SheetBehind = () => (
  <Behind>
    <Band $h={9} $bg="#ececf2" />
    <Band $h={28} $bg="#f0f0f0" />
    <Band $h={32} $bg="#ededed" />
    <Band $h={37} />
    <Band $h={51}>ani<br />re</Band>
    <Band $h={7} $bg="#f0f0f0" />
    <Band $h={143} />
    <Band $h={29} $bg="#eee" />
    <SheetRows>
      {Array.from({ length: 23 }, (_, i) => <SheetRow key={i} $faint={i === 3 || i === 16} />)}
    </SheetRows>
    <SheetFoot><b>gr</b><br />&nbsp;3</SheetFoot>
  </Behind>
);

const TaskbarView = () => (
  <Taskbar>
    <TaskRow>
      <Weather>
        <svg width="20" height="20" viewBox="0 0 20 20"><path d="M5 15a5 5 0 0 1 0-9 6 6 0 0 1 11 1 4 4 0 0 1 0 8z" fill="#8ea6d4" /><path d="M6 13a4 4 0 0 1 1-7q6-2 8 3z" fill="#b9c9e8" /><path d="M11 12l6 5-6 3z" fill="#1668dc" /></svg>
        <span>7°C<br />Lekki deszcz</span>
      </Weather>
      <Apps>
        <svg width="20" height="20" viewBox="0 0 20 20" fill="#1a8fe0"><path d="M0 0h9.500v9.500H0zM10.500 0H20v9.500h-9.500zM0 10.500h9.500V20H0zM10.500 10.500H20V20h-9.500z" /></svg>
        <Search>
          <Ic s={15}><circle cx="6.500" cy="6.500" r="5" strokeWidth="1.800" /><path d="M10 10l5 5" strokeWidth="2" /></Ic>
          <SearchInput aria-label="Wyszukaj" placeholder="Wyszukaj" />
        </Search>
        <TaskApp aria-label="Task view"><svg width="20" height="20" viewBox="0 0 20 20"><path d="M0 6h14v14H0z" fill="#333" /><path d="M6 1h14v14H6z" fill="#f5f5f5" stroke="#ccc" strokeWidth=".5" /><path d="M6 6h8v9H6z" fill="#c4c4c4" /></svg></TaskApp>
        <TaskApp aria-label="Outlook"><svg width="22" height="20" viewBox="0 0 22 20"><path d="M6 2h15v16H6z" fill="#2a9be6" /><path d="M6 10l8 4 7-5v10H6z" fill="#0f5fb0" /><path d="M0 5h11v11H0z" fill="#0d6cc4" /><circle cx="5.500" cy="10.500" r="2.800" fill="none" stroke="#fff" strokeWidth="1.600" /></svg><Badge $bg="#35b4dc"><svg width="13" height="13" viewBox="0 0 13 13" fill="none" stroke="#123"><path d="M3 4h7v5.500H3zM3 4.500l3.500 2.500L10 4.500" /></svg></Badge></TaskApp>
        <TaskApp aria-label="Chrome"><svg width="21" height="21" viewBox="0 0 20 20"><circle cx="10" cy="10" r="10" fill="#fbbc05" /><path d="M10 10L1.300 5A10 10 0 0 1 18.700 5z" fill="#e33b2e" /><path d="M10 10l0 10A10 10 0 0 1 1.300 5z" fill="#2ba24c" /><circle cx="10" cy="10" r="4.800" fill="#fff" /><circle cx="10" cy="10" r="3.700" fill="#2f74e0" /></svg></TaskApp>
        <TaskApp aria-label="Files"><svg width="22" height="18" viewBox="0 0 22 18"><path d="M0 0h9l2 3h11v15H0z" fill="#e9a820" /><path d="M0 5h22v13H0z" fill="#fdd14a" /><path d="M5 13h12v5H5z" fill="#2b86d8" /></svg></TaskApp>
        <TaskApp aria-label="Password vault"><svg width="21" height="21" viewBox="0 0 20 20"><circle cx="10" cy="10" r="9" fill="#bcd0f5" stroke="#1b2550" strokeWidth="1.500" /><path d="M5.500 9h9v6.500h-9z" fill="#111" /><path d="M7 9V6.500a3 3 0 0 1 6 0V9" fill="none" stroke="#111" strokeWidth="1.600" /><path d="M10 11v3" stroke="#fff" /></svg></TaskApp>
        <TaskApp aria-label="SAP Logon" $active><svg width="20" height="12" viewBox="0 0 20 12"><path d="M0 0h20L11 12H0z" fill="#2176ae" /><path d="M2 3h13l-3 4H2z" fill="#f0b429" /></svg></TaskApp>
        <TaskApp aria-label="Teams"><svg width="22" height="20" viewBox="0 0 22 20"><circle cx="13" cy="3" r="3" fill="#7b83eb" /><path d="M8 7h13v7q0 5-6 5t-7-5z" fill="#5b62c8" /><path d="M0 5h11v11H0z" fill="#4049b0" /><path d="M3 8h5M5.500 8v6" stroke="#fff" strokeWidth="1.500" /></svg><Badge $bg="#cc2a22">1</Badge></TaskApp>
        <TaskApp aria-label="Padlock"><svg width="16" height="20" viewBox="0 0 16 20"><path d="M3.500 9V5a4.500 4 0 0 1 9 0v4" fill="none" stroke="#c79a1c" strokeWidth="2.400" /><path d="M1 8h14v9q-7 5-14 0z" fill="#efc531" /><circle cx="8" cy="12" r="1.500" fill="#332" /><path d="M8 12v4" stroke="#332" strokeWidth="1.500" /></svg></TaskApp>
        <TaskApp aria-label="Notes"><svg width="19" height="19" viewBox="0 0 19 19"><path d="M0 0h19v19H0z" fill="#333" /><path d="M19 10v9h-9q0-4 3-6t6-3z" fill="#ffd91c" /></svg></TaskApp>
        <TaskApp aria-label="Excel"><svg width="20" height="19" viewBox="0 0 20 19"><path d="M4 0h16v19H4z" fill="#21a366" /><path d="M12 0h8v9h-8z" fill="#33c481" /><path d="M0 5h11v11H0z" fill="#107c41" /><path d="M3 8l5 6M8 8l-5 6" stroke="#fff" strokeWidth="1.600" /></svg></TaskApp>
        <TaskApp aria-label="Settings"><svg width="20" height="20" viewBox="0 0 20 20"><circle cx="10" cy="10" r="9" fill="none" stroke="#6d7785" strokeWidth="2" strokeDasharray="4.700 4.700" /><circle cx="10" cy="10" r="8" fill="#6d7785" /><circle cx="10" cy="10" r="5.500" fill="#dfe9f5" /><circle cx="10" cy="10" r="4" fill="#0d5cb4" /></svg></TaskApp>
      </Apps>
      <Clock>10:01<br />14.10.2025</Clock>
    </TaskRow>
  </Taskbar>
);

export default function App() {
  return (
    <>
      <Global />
      <Screen>
        <Desktop>
          <Monitor />
          <SheetBehind />
          <RfScreen />
        </Desktop>
        <TaskbarView />
      </Screen>
    </>
  );
}
